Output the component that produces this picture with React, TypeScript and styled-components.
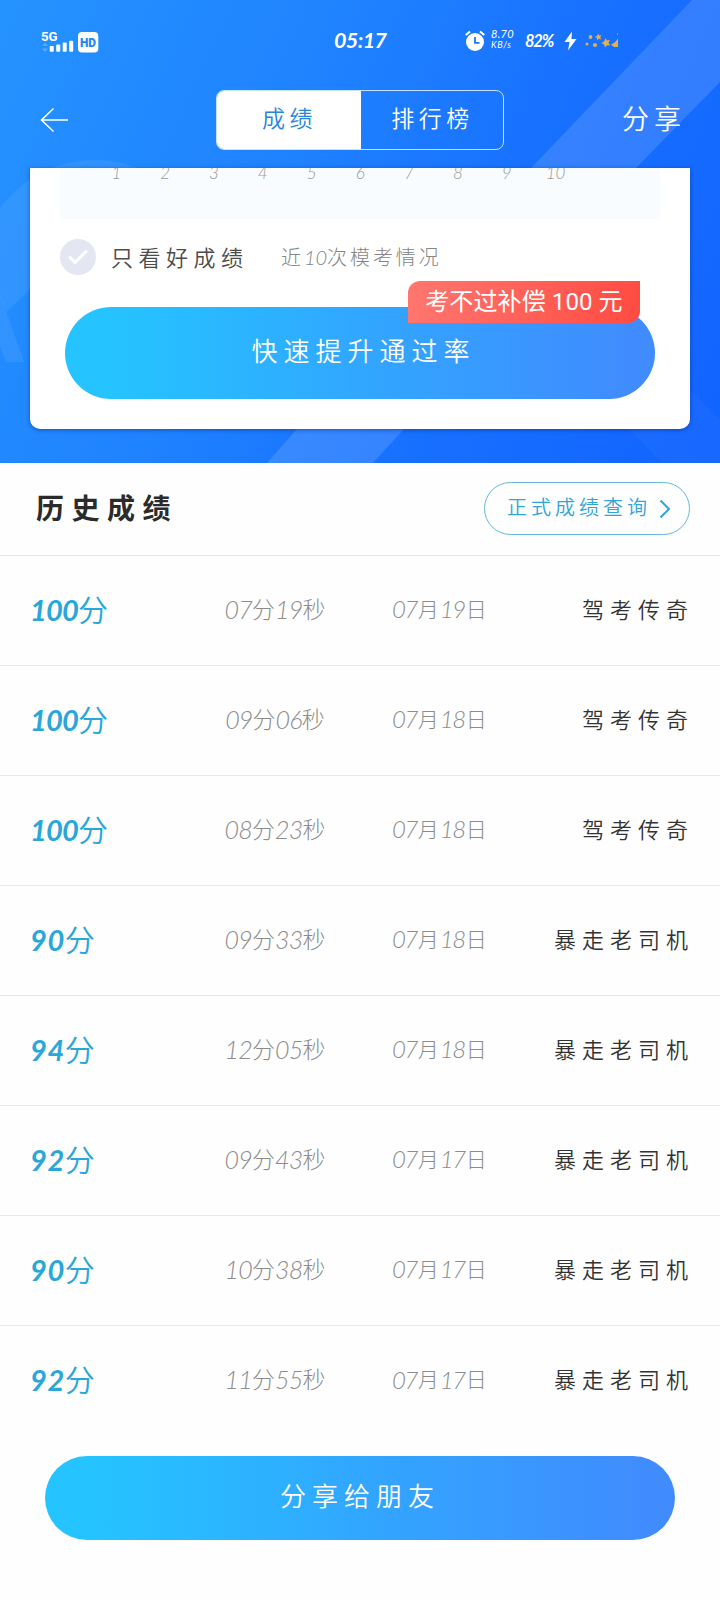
import React from "react";
import styled, { createGlobalStyle } from "styled-components";

const Global = createGlobalStyle`
  * { box-sizing: border-box; }
  body { margin: 0; background: #fefefe; }
  button { border: 0; background: none; padding: 0; font: inherit; color: inherit; }
`;

const Page = styled.main`
  width: 720px;
  height: 1600px;
  overflow: hidden;
  background: #fefefe;
  color: #333;
  font-family: Lato, "Noto Sans CJK SC", sans-serif;
`;

const Hero = styled.header`
  position: relative;
  isolation: isolate;
  height: 463px;
  overflow: hidden;
  background: linear-gradient(115deg, #2593ff 0%, #1f82ff 38%, #1870ff 66%, #1163ff 100%);
`;

const Backdrop = styled.svg`
  position: absolute;
  inset: 0;
  z-index: -1;
`;

const StatusBar = styled.div`
  display: grid;
  grid-template-columns: 294px 132px 1fr;
  align-items: center;
  height: 82px;
  padding-left: 40px;
  color: #fff;
`;

const Signal = styled.div`
  display: flex;
  align-items: center;
  margin-top: -1px;
`;

const Clock = styled.time`
  margin-top: -3px;
  font-size: 21.5px;
  font-style: italic;
  font-weight: 700;
  letter-spacing: -0.6px;
`;

const StatusIcons = styled.div`
  display: flex;
  align-items: center;
`;

const Speed = styled.div`
  display: flex;
  flex-direction: column;
  width: 34px;
  margin: -4px 0 0 6px;
  font-size: 11px;
  font-style: italic;
  line-height: 12px;
  letter-spacing: 0.3px;
  small { font-size: 9px; line-height: 10px; letter-spacing: 0.6px; }
`;

const Battery = styled.span`
  width: 39px;
  font-size: 16.5px;
  font-style: italic;
  font-weight: 700;
  letter-spacing: -1.2px;
`;

const NavBar = styled.nav`
  display: grid;
  grid-template-columns: 176px 288px 1fr;
  align-items: center;
  height: 86px;
  padding: 0 34px 12px 40px;
  color: #fff;
`;

const Tabs = styled.div`
  display: grid;
  grid-template-columns: 144px 1fr;
  height: 60px;
  margin-top: 2px;
  border: 1.5px solid #c4e2ff;
  border-radius: 8px;
  overflow: hidden;
`;

const Tab = styled.button<{ $active?: boolean }>`
  padding: 0 2px 6px 3px;
  font-size: 23px;
  font-weight: 350;
  letter-spacing: 4.5px;
  color: ${(p) => (p.$active ? "#2885dc" : "#fff")};
  background: ${(p) => (p.$active ? "#fff" : "transparent")};
`;

const ShareLink = styled.button`
  justify-self: end;
  margin: -4px 0 0;
  font-size: 27px;
  font-weight: 350;
  letter-spacing: 5px;
`;

const Card = styled.section`
  width: 660px;
  height: 261px;
  margin: 0 auto;
  padding: 0 30px;
  border-radius: 0 0 10px 10px;
  background: #fff;
  box-shadow: 0 1px 4px rgba(0, 35, 110, 0.5);
`;

const AxisStrip = styled.div`
  height: 51px;
  padding-left: 32px;
  overflow: hidden;
  background: #f8fcff;
`;

const AxisLabels = styled.div`
  display: grid;
  grid-template-columns: repeat(10, 48.8px);
  margin-top: -7px;
  color: #999;
  font-size: 17px;
  font-style: italic;
  font-weight: 300;
  line-height: 24px;
  text-align: center;
`;

const Filters = styled.div`
  display: flex;
  align-items: center;
  height: 76px;
`;

const Check = styled.span`
  display: grid;
  place-items: center;
  width: 36px;
  height: 36px;
  border-radius: 50%;
  background: #e4e7f2;
`;

const FilterLabel = styled.span`
  width: 170px;
  margin: -2px 0 0 15px;
  font-size: 22px;
  font-weight: 350;
  letter-spacing: 5.5px;
  color: #4c4c4c;
`;

const FilterNote = styled.span`
  margin-top: -2px;
  font-size: 20px;
  font-weight: 300;
  letter-spacing: 2.9px;
  color: #858585;
`;

const Pill = styled.button<{ $w: number; $h: number; $size: number }>`
  position: relative;
  display: flex;
  align-items: center;
  justify-content: center;
  width: ${(p) => p.$w}px;
  height: ${(p) => p.$h}px;
  padding-bottom: 8px;
  border-radius: 46px;
  color: #fff;
  font-size: ${(p) => p.$size}px;
  font-weight: 350;
  letter-spacing: 6px;
  background: linear-gradient(90deg, #25c3ff 8%, #32a5ff 53%, #408cff 95%);
`;

const BoostButton = styled(Pill)`
  margin: 12px 0 0 5px;
  padding-left: 7px;
`;

const Ribbon = styled.span`
  position: absolute;
  top: -26px;
  right: 15px;
  width: 232px;
  height: 42px;
  border-radius: 12px 0 12px 0;
  font-family: Roboto, "Noto Sans CJK SC", sans-serif;
  font-size: 24px;
  font-weight: 400;
  line-height: 43px;
  letter-spacing: 0.1px;
  white-space: pre;
  text-align: center;
  background: linear-gradient(100deg, #ff7770, #ff4b42);
`;

const HistoryHead = styled.div`
  display: flex;
  align-items: center;
  justify-content: space-between;
  height: 93px;
  padding: 0 30px 0 36px;
  border-bottom: 1px solid #e6e6e6;
`;

const Title = styled.h2`
  margin: 0 0 4px;
  font-size: 28px;
  font-weight: 700;
  letter-spacing: 7.5px;
  color: #2b2b2b;
`;

const QueryButton = styled.button`
  display: flex;
  align-items: center;
  width: 206px;
  height: 53px;
  margin-bottom: 1px;
  padding-left: 22px;
  border: 1px solid #67b7d9;
  border-radius: 27px;
  color: #31a4d8;
  font-size: 20px;
  font-weight: 350;
  letter-spacing: 4px;
  span { width: 152px; padding-bottom: 5px; text-align: left; white-space: nowrap; }
`;

const Row = styled.li`
  display: grid;
  grid-template-columns: 185px 120px 1fr 158px;
  align-items: center;
  height: 110px;
  padding: 0 28px 6px 30px;
  border-bottom: 1px solid #e8e8e8;
  &:last-child { border-bottom: 0; }
`;

const List = styled.ul`
  margin: 0;
  padding: 0;
  list-style: none;
`;

const Num = styled.span<{ $gap?: number }>`
  font-style: italic;
  letter-spacing: ${(p) => p.$gap ?? 0}px;
`;

const Score = styled.span`
  display: flex;
  align-items: center;
  color: #2aa6d8;
  font-size: 30px;
  font-weight: 350;
  ${Num} { padding-top: 3px; font-size: 29px; font-weight: 700; }
`;

const Meta = styled.span`
  display: flex;
  align-items: center;
  justify-content: center;
  color: #8c8c8c;
  font-size: 23px;
  font-weight: 300;
  ${Num} { padding-top: 2px; font-size: 25px; }
`;

const DateMeta = styled(Meta)`
  justify-content: flex-start;
  padding-left: 57px;
  font-size: 21px;
  gap: 1px;
  ${Num} { font-size: 24px; }
`;

const Name = styled.span`
  justify-self: end;
  font-size: 22px;
  font-weight: 350;
  letter-spacing: 6px;
  margin-right: -2px;
  white-space: nowrap;
`;

const Footer = styled.footer`
  display: flex;
  justify-content: center;
  padding-top: 20px;
`;

const records = [
  ["100", "07", "19", "07", "19", "驾考传奇"],
  ["100", "09", "06", "07", "18", "驾考传奇"],
  ["100", "08", "23", "07", "18", "驾考传奇"],
  ["90", "09", "33", "07", "18", "暴走老司机"],
  ["94", "12", "05", "07", "18", "暴走老司机"],
  ["92", "09", "43", "07", "17", "暴走老司机"],
  ["90", "10", "38", "07", "17", "暴走老司机"],
  ["92", "11", "55", "07", "17", "暴走老司机"],
];

const HeroShapes = () => (
  <Backdrop width="720" height="463" viewBox="0 0 720 463">
    <path d="M0 208A118 118 0 0 1 213 278V288H32L6 312 0 296Z" fill="#fff" opacity=".07" />
    <path d="M0 294 24 362H6L0 347Z" fill="#fff" opacity=".07" />
    <path d="M692 0 532 167 297 429 267 463H373L404 429 637 167 720 82V0Z" fill="#fff" opacity=".13" />
    <path d="M690 390 720 420V463H662L625 425Z" fill="#fff" opacity=".03" />
  </Backdrop>
);

const SignalIcon = () => (
  <svg width="60" height="26" viewBox="0 0 60 26" fill="#fff">
    <text x="1" y="12.5" fontFamily="Roboto, sans-serif" fontSize="13" fontWeight="700" textLength="16.5" lengthAdjust="spacingAndGlyphs">5G</text>
    <path d="M5 14.5 8 18H2ZM5 24 2 20.5H8Z" opacity=".25" />
    <rect x="9.7" y="18" width="4" height="5.7" rx="1" />
    <rect x="16.2" y="16.5" width="4" height="7.2" rx="1" />
    <rect x="22.7" y="14.5" width="4" height="9.2" rx="1" />
    <rect x="29.2" y="12.7" width="4" height="11" rx="1" />
    <rect x="38" y="4" width="20.3" height="20.5" rx="4" />
    <text x="40" y="19" fill="#2188f5" fontFamily="Roboto, sans-serif" fontSize="13" fontWeight="900" textLength="16" lengthAdjust="spacingAndGlyphs">HD</text>
  </svg>
);

const AlarmIcon = () => (
  <svg width="20" height="22" viewBox="0 0 20 22" style={{ marginLeft: -1 }}>
    <circle cx="10" cy="12" r="9" fill="#fff" />
    <path d="M.8 5 5 1.5M15 1.5 19.2 5" stroke="#fff" strokeWidth="2.2" />
    <path d="M10 7V12.8H14.5" fill="none" stroke="#2078f5" strokeWidth="1.8" />
  </svg>
);

const BoltIcon = () => (
  <svg width="13" height="20" viewBox="0 0 13 20" fill="#fff">
    <path d="M8 .5.5 11H5.5L4 19.5 12.5 8H7.4Z" />
  </svg>
);

const StarsIcon = () => (
  <svg width="34" height="18" viewBox="0 0 34 18" fill="#e3b04a" style={{ marginLeft: 8 }}>
    <circle cx="2" cy="12" r="1.5" />
    <circle cx="5.5" cy="5" r="1.9" />
    <circle cx="10" cy="13" r="2.1" />
    <path d="m13 1.5 1.2 2 2.4-.4-1.4 2 1 2.3-2.4-.7-1.8 1.7v-2.5L9.8 4.7l2.4-.8Z" />
    <path d="m20.5 6 1.3 2.5 3-.7-1.3 2.9 1.7 2.7-3-.2-2.2 2.3-.8-3.1-2.8-1.3 2.7-1.6Z" />
    <path d="m33 6v9h-4l-3-2.5 3-1.5 3-3ZM31.6 1.5H33V3.2Z" />
  </svg>
);

export default function App() {
  return (
    <Page>
      <Global />
      <Hero>
        <HeroShapes />
        <StatusBar>
          <Signal><SignalIcon /></Signal>
          <Clock>05:17</Clock>
          <StatusIcons>
            <AlarmIcon />
            <Speed>8.70<small>KB/s</small></Speed>
            <Battery>82%</Battery>
            <BoltIcon />
            <StarsIcon />
          </StatusIcons>
        </StatusBar>
        <NavBar>
          <svg width="30" height="26" viewBox="0 0 30 26" fill="none" stroke="#fff" strokeWidth="1.5" style={{ marginTop: 2 }}>
            <path d="M28 13H1.5M13.5 1.5 1.5 13 13.5 24.5" />
          </svg>
          <Tabs>
            <Tab $active>成绩</Tab>
            <Tab>排行榜</Tab>
          </Tabs>
          <ShareLink>分享</ShareLink>
        </NavBar>
        <Card>
          <AxisStrip>
            <AxisLabels>
              {Array.from({ length: 10 }, (_, i) => <span key={i}>{i + 1}</span>)}
            </AxisLabels>
          </AxisStrip>
          <Filters>
            <Check>
              <svg width="20" height="16" viewBox="0 0 20 16" fill="none" stroke="#fff" strokeWidth="3" strokeLinecap="round" strokeLinejoin="round">
                <path d="M2 8.5 7 13.5 18 2.5" />
              </svg>
            </Check>
            <FilterLabel>只看好成绩</FilterLabel>
            <FilterNote>近<Num $gap={0}>10</Num>次模考情况</FilterNote>
          </Filters>
          <BoostButton $w={590} $h={92} $size={26}>
            快速提升通过率
            <Ribbon>考不过补偿 100 元</Ribbon>
          </BoostButton>
        </Card>
      </Hero>
      <HistoryHead>
        <Title>历史成绩</Title>
        <QueryButton>
          <span>正式成绩查询</span>
          <svg width="12" height="20" viewBox="0 0 12 20" fill="none" stroke="currentColor" strokeWidth="2">
            <path d="m1.5 1.5 8.5 8.5-8.5 8.5" />
          </svg>
        </QueryButton>
      </HistoryHead>
      <List>
        {records.map(([score, min, sec, month, day, name], i) => (
          <Row key={i}>
            <Score><Num $gap={score.length > 2 ? -0.8 : 0.6}>{score}</Num>分</Score>
            <Meta><Num $gap={-0.8}>{min}</Num>分<Num $gap={-0.8}>{sec}</Num>秒</Meta>
            <DateMeta><Num $gap={-1.5}>{month}</Num>月<Num $gap={-1.5}>{day}</Num>日</DateMeta>
            <Name>{name}</Name>
          </Row>
        ))}
      </List>
      <Footer>
        <Pill $w={630} $h={84} $size={26}>分享给朋友</Pill>
      </Footer>
    </Page>
  );
}
